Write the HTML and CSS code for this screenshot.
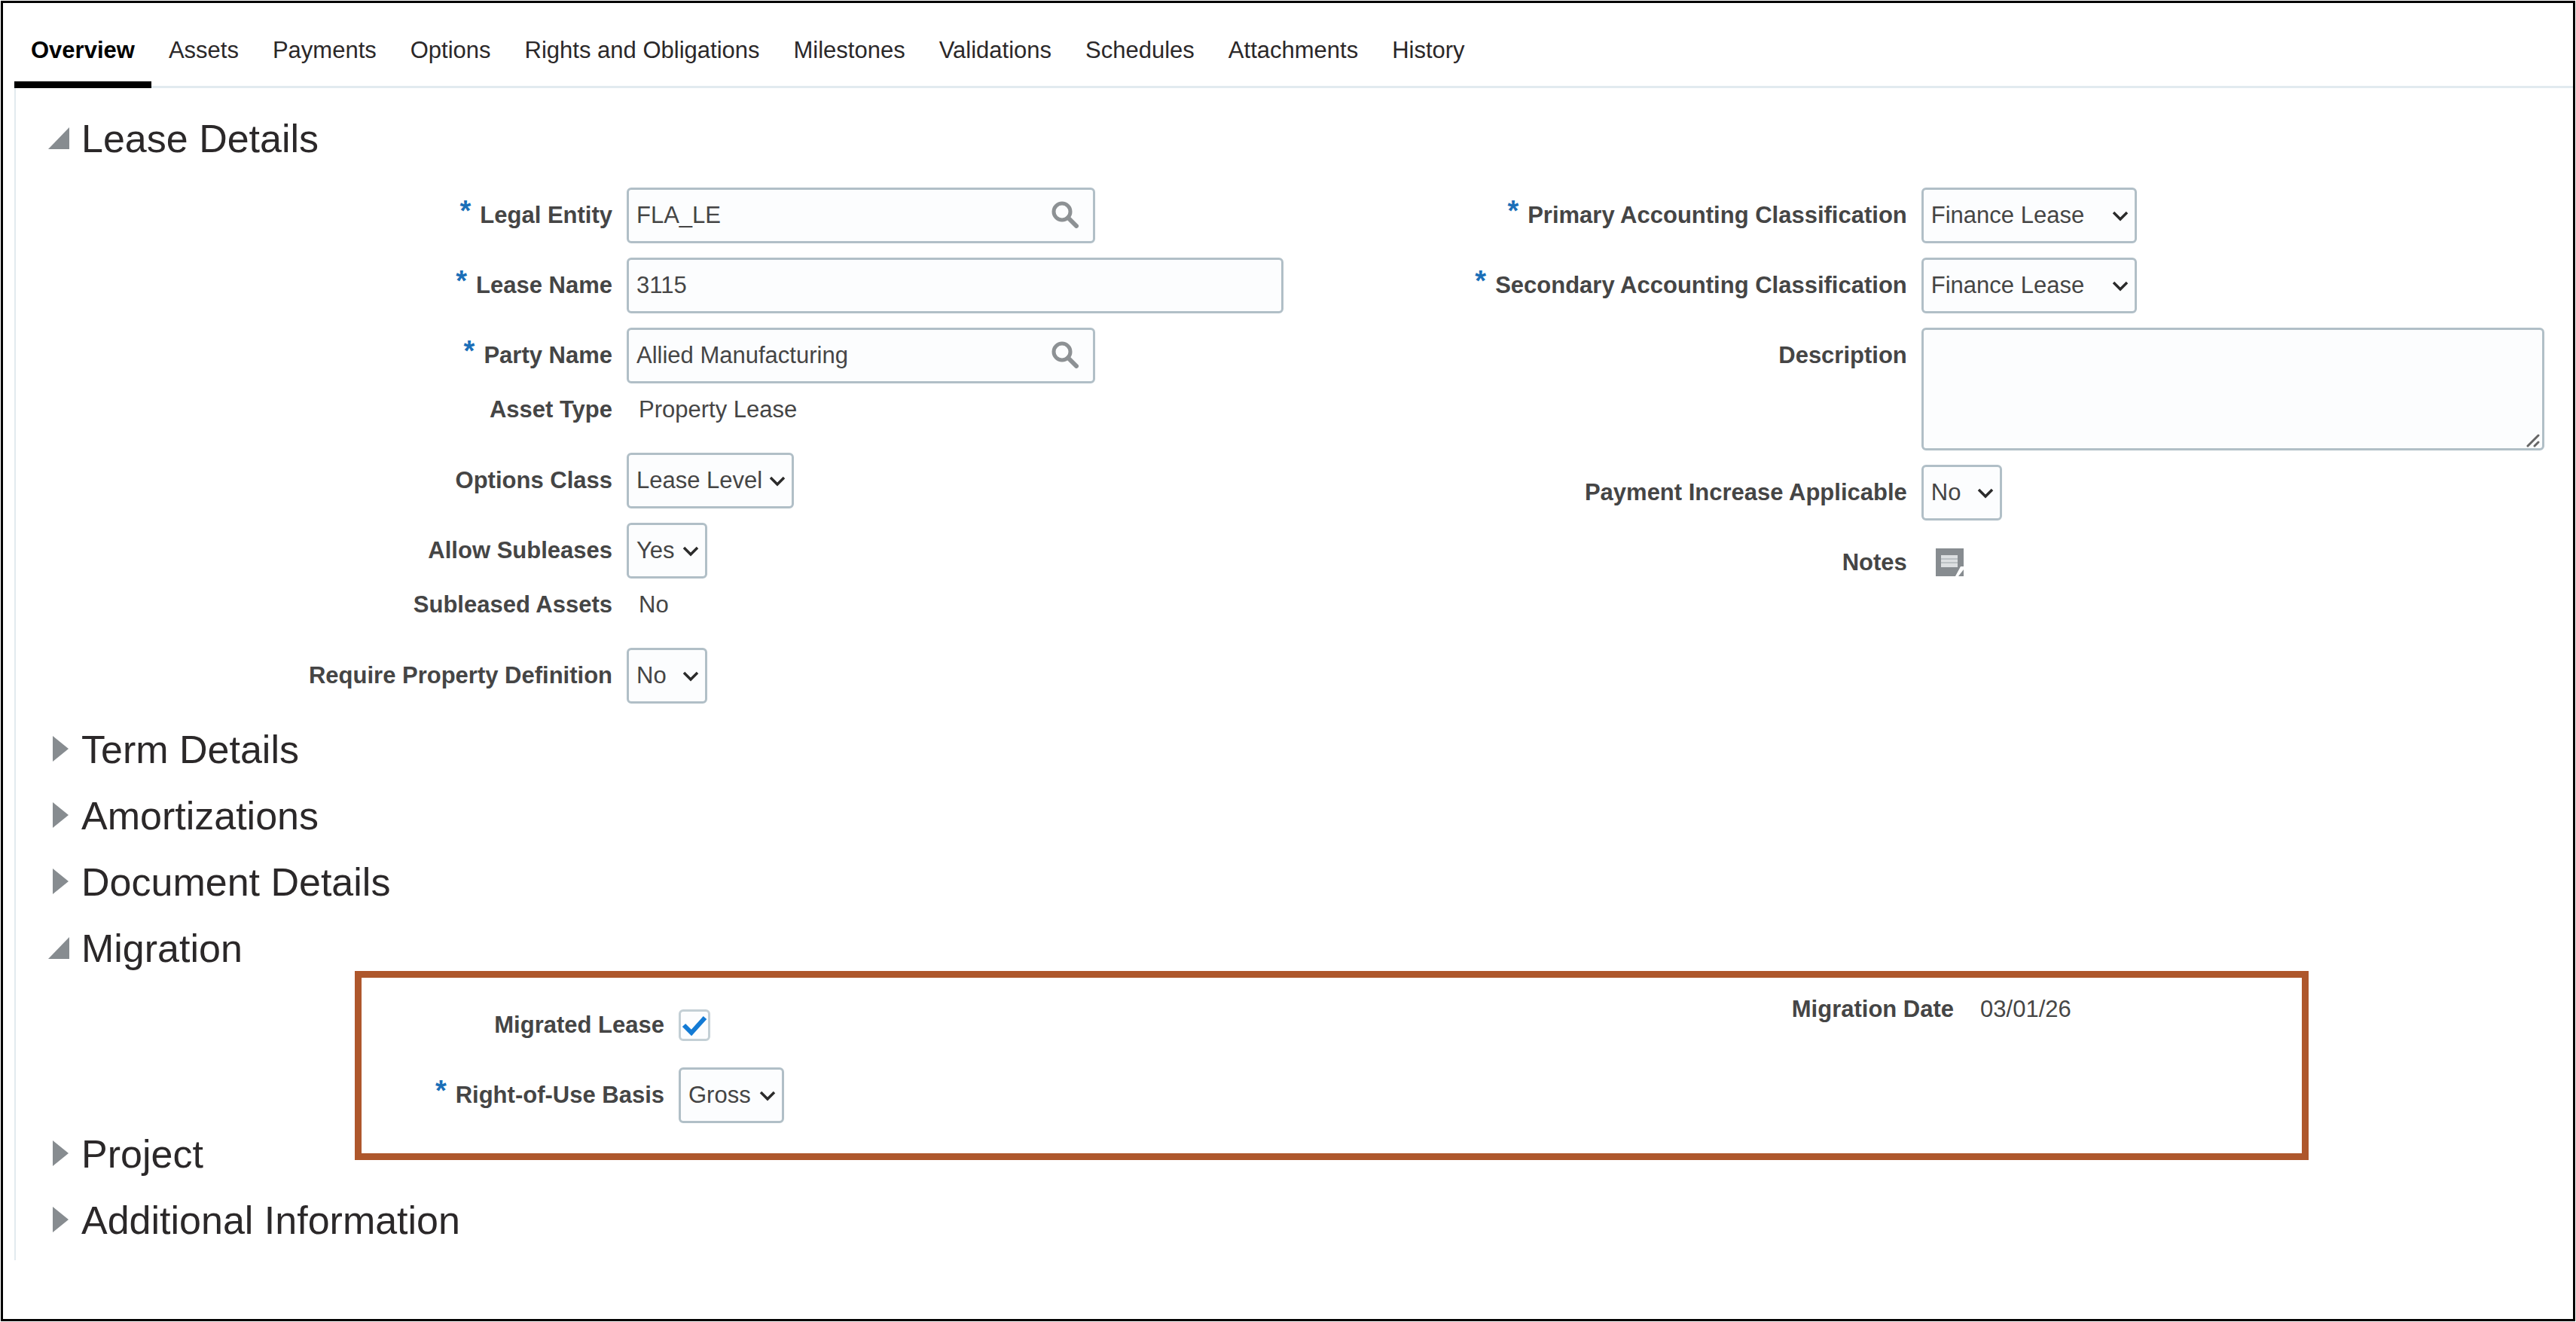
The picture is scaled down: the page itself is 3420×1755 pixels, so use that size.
FILE: index.html
```html
<!DOCTYPE html>
<html lang="en">
<head>
    <meta charset="UTF-8">
    <meta name="viewport" content="width=device-width, initial-scale=1.0">
    <title>Lease Overview</title>
    <link rel="stylesheet" href="styles.css">
</head>
<body>
    <!-- Shared icons -->
    <svg class="icon-defs" aria-hidden="true">
        <symbol id="icon-chevron" viewBox="0 0 22 14">
            <path d="M2 2 L11 11 L20 2" fill="none" stroke="#2b2b2b" stroke-width="3.5"/>
        </symbol>
        <symbol id="icon-search" viewBox="0 0 36 36">
            <circle cx="14" cy="14" r="11" fill="none" stroke="#8d9194" stroke-width="5"/>
            <path d="M22 22 L33 33" fill="none" stroke="#8d9194" stroke-width="6" stroke-linecap="round"/>
        </symbol>
        <symbol id="icon-open" viewBox="0 0 28 30">
            <path d="M28 0 V29 H0 Z" fill="#878c90"/>
        </symbol>
        <symbol id="icon-closed" viewBox="0 0 28 36">
            <path d="M6 0 L27 17 L6 34 Z" fill="#878c90"/>
        </symbol>
    </svg>

    <div class="page">
        <nav class="tabs">
            <a class="tab active" href="#">Overview</a>
            <a class="tab" href="#">Assets</a>
            <a class="tab" href="#">Payments</a>
            <a class="tab" href="#">Options</a>
            <a class="tab" href="#">Rights and Obligations</a>
            <a class="tab" href="#">Milestones</a>
            <a class="tab" href="#">Validations</a>
            <a class="tab" href="#">Schedules</a>
            <a class="tab" href="#">Attachments</a>
            <a class="tab" href="#">History</a>
        </nav>

        <main class="panel">
            <section class="section details">
                <h2><button class="toggle" type="button" aria-expanded="true"><svg class="arrow-open"><use href="#icon-open"/></svg>Lease Details</button></h2>
                <div class="form">
                    <div class="column">
                        <div class="field">
                            <label for="legalEntity"><span class="required">*</span>Legal Entity</label>
                            <div class="control lookup">
                                <input type="text" id="legalEntity" value="FLA_LE">
                                <button class="search" type="button" aria-label="Search"><svg><use href="#icon-search"/></svg></button>
                            </div>
                        </div>
                        <div class="field">
                            <label for="leaseName"><span class="required">*</span>Lease Name</label>
                            <div class="control wide">
                                <input type="text" id="leaseName" value="3115">
                            </div>
                        </div>
                        <div class="field">
                            <label for="partyName"><span class="required">*</span>Party Name</label>
                            <div class="control lookup">
                                <input type="text" id="partyName" value="Allied Manufacturing">
                                <button class="search" type="button" aria-label="Search"><svg><use href="#icon-search"/></svg></button>
                            </div>
                        </div>
                        <div class="field static">
                            <span class="label">Asset Type</span>
                            <span class="value">Property Lease</span>
                        </div>
                        <div class="field">
                            <label for="optionsClass">Options Class</label>
                            <div class="control options-class">
                                <select id="optionsClass"><option>Lease Level</option></select>
                                <svg class="chevron"><use href="#icon-chevron"/></svg>
                            </div>
                        </div>
                        <div class="field">
                            <label for="allowSubleases">Allow Subleases</label>
                            <div class="control yes-no">
                                <select id="allowSubleases"><option>Yes</option><option>No</option></select>
                                <svg class="chevron"><use href="#icon-chevron"/></svg>
                            </div>
                        </div>
                        <div class="field static">
                            <span class="label">Subleased Assets</span>
                            <span class="value">No</span>
                        </div>
                        <div class="field">
                            <label for="requireProperty">Require Property Definition</label>
                            <div class="control yes-no">
                                <select id="requireProperty"><option>No</option><option>Yes</option></select>
                                <svg class="chevron"><use href="#icon-chevron"/></svg>
                            </div>
                        </div>
                    </div>
                    <div class="column">
                        <div class="field">
                            <label for="primaryClass"><span class="required">*</span>Primary Accounting Classification</label>
                            <div class="control classification">
                                <select id="primaryClass"><option>Finance Lease</option><option>Operating Lease</option></select>
                                <svg class="chevron"><use href="#icon-chevron"/></svg>
                            </div>
                        </div>
                        <div class="field">
                            <label for="secondaryClass"><span class="required">*</span>Secondary Accounting Classification</label>
                            <div class="control classification">
                                <select id="secondaryClass"><option>Finance Lease</option><option>Operating Lease</option></select>
                                <svg class="chevron"><use href="#icon-chevron"/></svg>
                            </div>
                        </div>
                        <div class="field top">
                            <label for="description">Description</label>
                            <div class="control fill">
                                <textarea id="description"></textarea>
                                <svg class="grip" viewBox="0 0 18 18"><path d="M2 16 L16 2 M11 16 L16 11" stroke="#666" stroke-width="3" stroke-linecap="round"/></svg>
                            </div>
                        </div>
                        <div class="field">
                            <label for="paymentIncrease">Payment Increase Applicable</label>
                            <div class="control yes-no">
                                <select id="paymentIncrease"><option>No</option><option>Yes</option></select>
                                <svg class="chevron"><use href="#icon-chevron"/></svg>
                            </div>
                        </div>
                        <div class="field">
                            <span class="label">Notes</span>
                            <button class="notes" type="button" aria-label="Notes">
                                <svg viewBox="0 0 38 38">
                                    <path d="M0 0 H37 V24 H33 L26 37 H0 Z" fill="#878c90"/>
                                    <path d="M7 9 H29 V25 H7 Z" fill="#dcdfe1"/>
                                    <path d="M7 14 H29 M7 19 H29" stroke="#bcc1c4" stroke-width="2"/>
                                    <path d="M37 28 V37 H30 Z" fill="#878c90"/>
                                </svg>
                            </button>
                        </div>
                    </div>
                </div>
            </section>

            <section class="section">
                <h2><button class="toggle" type="button" aria-expanded="false"><svg class="arrow-closed"><use href="#icon-closed"/></svg>Term Details</button></h2>
            </section>
            <section class="section">
                <h2><button class="toggle" type="button" aria-expanded="false"><svg class="arrow-closed"><use href="#icon-closed"/></svg>Amortizations</button></h2>
            </section>
            <section class="section">
                <h2><button class="toggle" type="button" aria-expanded="false"><svg class="arrow-closed"><use href="#icon-closed"/></svg>Document Details</button></h2>
            </section>

            <section class="section migration">
                <h2><button class="toggle" type="button" aria-expanded="true"><svg class="arrow-open"><use href="#icon-open"/></svg>Migration</button></h2>
                <div class="form">
                    <div class="column">
                        <div class="field">
                            <label for="migratedLease">Migrated Lease</label>
                            <div class="control">
                                <input type="checkbox" id="migratedLease" checked>
                                <svg class="tick" viewBox="0 0 42 42"><path d="M7 21 L17 31 L35 11" fill="none" stroke="#127ad4" stroke-width="6"/></svg>
                            </div>
                        </div>
                        <div class="field">
                            <label for="rouBasis"><span class="required">*</span>Right-of-Use Basis</label>
                            <div class="control basis">
                                <select id="rouBasis"><option>Gross</option><option>Net</option></select>
                                <svg class="chevron"><use href="#icon-chevron"/></svg>
                            </div>
                        </div>
                    </div>
                    <div class="column">
                        <div class="field static">
                            <span class="label">Migration Date</span>
                            <span class="value">03/01/26</span>
                        </div>
                    </div>
                </div>
                <div class="highlight"></div>
            </section>

            <section class="section">
                <h2><button class="toggle" type="button" aria-expanded="false"><svg class="arrow-closed"><use href="#icon-closed"/></svg>Project</button></h2>
            </section>
            <section class="section">
                <h2><button class="toggle" type="button" aria-expanded="false"><svg class="arrow-closed"><use href="#icon-closed"/></svg>Additional Information</button></h2>
            </section>
        </main>
    </div>
</body>
</html>
```
FILE: styles.css
```css
* {
    box-sizing: border-box;
}
body {
    margin: 0;
    padding: 1px;
    font-family: "Liberation Sans", Arial, sans-serif;
    font-size: 31px;
    line-height: 36px;
    background-color: #ffffff;
    color: #454545;
}
button, input, select, textarea {
    margin: 0;
    font: inherit;
    color: inherit;
}
button {
    padding: 0;
    border: none;
    background: none;
    cursor: pointer;
}
svg {
    display: block;
}
.icon-defs {
    position: absolute;
    width: 0;
    height: 0;
}
.page {
    min-height: calc(100vh - 2px);
    border: 3px solid #000000;
}

/* Tabs */
.tabs {
    display: flex;
    gap: 1px;
    margin-left: 15px;
    box-shadow: inset 0 -3px #e2eaef;
}
.tab {
    padding: 45px 22px 23px;
    border-bottom: 9px solid transparent;
    color: #2b2829;
    text-decoration: none;
}
.tab.active {
    border-bottom-color: #000000;
    color: #000000;
    font-weight: bold;
}

/* Sections */
.panel {
    margin-left: 15px;
    padding: 37px 0 23px;
    border-left: 2px solid #e2eaef;
}
.section {
    position: relative;
    margin-bottom: 28px;
}
.section:last-child {
    margin-bottom: 0;
}
.section.details {
    margin-bottom: 31px;
}
.section.migration {
    margin-bottom: 11px;
}
h2 {
    margin: 0;
    padding-left: 43px;
    font-size: 52px;
    font-weight: normal;
    line-height: 60px;
    color: #2b2829;
}
.toggle {
    display: flex;
    align-items: center;
    gap: 16px;
}
.arrow-open {
    width: 28px;
    height: 30px;
}
.arrow-closed {
    width: 28px;
    height: 36px;
}

/* Form */
.form {
    display: grid;
    grid-template-columns: 51.2% 1fr;
    padding: 35px 38px 0 0;
}
.migration .form {
    grid-template-columns: 51% 1fr;
}
.column {
    display: flex;
    flex-direction: column;
    gap: 19px;
}
.field {
    display: flex;
    align-items: center;
    min-height: 74px;
}
.field.top {
    align-items: flex-start;
}
.field.top label {
    line-height: 74px;
}
.field.static {
    align-items: flex-start;
    min-height: 54px;
    line-height: 32px;
}
label, .label {
    flex: none;
    width: 811px;
    padding-right: 19px;
    font-weight: bold;
    text-align: right;
}
.migration label, .migration .label {
    width: 880px;
}
.required {
    position: relative;
    top: -3px;
    margin-right: 12px;
    font-size: 38px;
    line-height: 28px;
    color: #1b6fb8;
}
.value {
    padding-left: 16px;
}
.control {
    position: relative;
}
.lookup {
    width: 622px;
}
.wide {
    width: 872px;
}
.fill {
    flex: 1;
}
.options-class {
    width: 222px;
}
.yes-no {
    width: 107px;
}
.classification {
    width: 286px;
}
.basis {
    width: 140px;
}
input[type="text"], select, textarea {
    display: block;
    width: 100%;
    height: 74px;
    padding: 0 10px;
    border: 3px solid #b1bfc7;
    border-radius: 6px;
    background-color: #fcfdfe;
}
select {
    appearance: none;
}
textarea {
    height: 163px;
    resize: none;
}
input[type="checkbox"] {
    display: block;
    appearance: none;
    width: 42px;
    height: 42px;
    border: 3px solid #c3cfd5;
    border-radius: 6px;
    background-color: #fcfdfe;
}
.chevron {
    position: absolute;
    top: 31px;
    right: 11px;
    width: 22px;
    height: 14px;
    pointer-events: none;
}
.search {
    position: absolute;
    top: 18px;
    right: 22px;
}
.search svg {
    width: 36px;
    height: 36px;
}
.grip {
    position: absolute;
    right: 6px;
    bottom: 4px;
    width: 18px;
    height: 18px;
    pointer-events: none;
}
.tick {
    position: absolute;
    top: 0;
    left: 0;
    width: 42px;
    height: 42px;
    pointer-events: none;
}
.notes {
    margin-left: 19px;
}
.notes svg {
    width: 38px;
    height: 38px;
}

/* Frame drawn over the migration fields */
.highlight {
    position: absolute;
    top: 60px;
    right: 351px;
    bottom: -49px;
    left: 450px;
    border: 9px solid #ae572c;
    pointer-events: none;
}
```
